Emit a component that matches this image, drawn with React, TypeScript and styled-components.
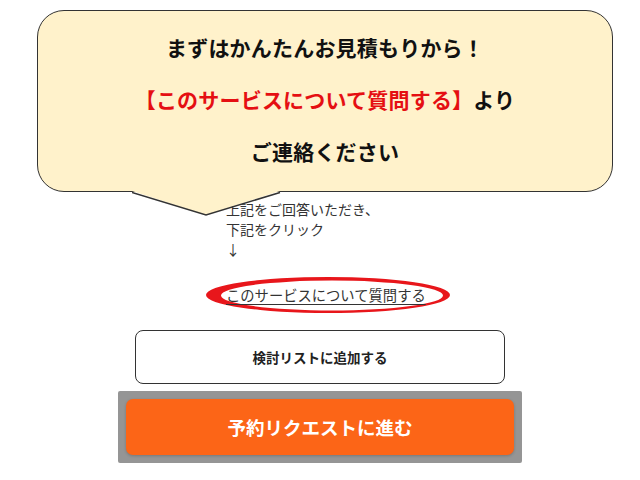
import styled, { createGlobalStyle } from 'styled-components'

const GlobalStyle = createGlobalStyle`
  html, body {
    margin: 0;
    padding: 0;
    background: #fff;
  }
  body {
    font-family: "Noto Sans CJK JP", "Noto Sans", sans-serif;
  }
`

const Page = styled.div`
  position: relative;
  width: 640px;
  height: 480px;
  overflow: hidden;
`

const Main = styled.div`
  width: 404px;
  margin: 0 auto;
  padding-top: 199px;
  display: flex;
  flex-direction: column;
`

const Guide = styled.div`
  padding-left: 108px;
  display: flex;
  flex-direction: column;
`

const GuideLine = styled.div`
  color: #333;
  font-size: 14px;
  line-height: 20px;
`

const LinkRow = styled.div`
  position: relative;
  margin-top: 23px;
  padding-left: 108px;
  height: 20px;
`

const QuestionLink = styled.a`
  position: relative;
  color: #333;
  font-size: 14.3px;
  line-height: 20px;
  text-decoration: underline;
  text-underline-offset: 3px;
  z-index: 1;
`

const Ellipse = styled.svg`
  position: absolute;
  left: 86px;
  top: -12px;
`

const ListButton = styled.button`
  margin: 28px 17px 0;
  height: 54px;
  border: 1px solid #333;
  border-radius: 8px;
  background: #fff;
  color: #222;
  font-family: inherit;
  font-size: 13.5px;
  font-weight: 700;
`

const RequestBand = styled.div`
  margin-top: 7px;
  padding: 8px;
  background: #959595;
  border-radius: 2px;
`

const RequestButton = styled.button`
  width: 100%;
  height: 56px;
  border: none;
  border-radius: 7px;
  background: #fc6517;
  color: #fff;
  font-family: inherit;
  font-size: 18.5px;
  font-weight: 700;
  box-shadow: 0 1px 3px rgba(0, 0, 0, 0.2);
`

const Bubble = styled.div`
  position: absolute;
  left: 37px;
  top: 10px;
  width: 576px;
  height: 182px;
  box-sizing: border-box;
  background: #fff2cb;
  border: 1.5px solid #333;
  border-radius: 27px;
  display: flex;
  flex-direction: column;
  align-items: center;
  padding-top: 10px;
  z-index: 2;
`

const Tail = styled.svg`
  position: absolute;
  left: 94px;
  top: 178px;
`

const BubbleLine = styled.div`
  color: #111;
  font-size: 21px;
  font-weight: 700;
  line-height: 52px;
  letter-spacing: 0.2px;
`

const Red = styled.span`
  color: #e50f12;
`

export default function App() {
  return (
    <>
      <GlobalStyle />
      <Page>
        <Main>
          <Guide>
            <GuideLine>上記をご回答いただき、</GuideLine>
            <GuideLine>下記をクリック</GuideLine>
            <GuideLine>↓</GuideLine>
          </Guide>
          <LinkRow>
            <Ellipse width="250" height="50" viewBox="0 0 250 50">
              <path
                fillRule="evenodd"
                fill="#e8161b"
                d="M2 25 A122 18 0 1 0 246 25 A122 18 0 1 0 2 25 Z M17 25.5 A111 15 0 1 0 239 25.5 A111 15 0 1 0 17 25.5 Z"
              />
            </Ellipse>
            <QuestionLink href="#">このサービスについて質問する</QuestionLink>
          </LinkRow>
          <ListButton>検討リストに追加する</ListButton>
          <RequestBand>
            <RequestButton>予約リクエストに進む</RequestButton>
          </RequestBand>
        </Main>
        <Bubble>
          <BubbleLine>まずはかんたんお見積もりから！</BubbleLine>
          <BubbleLine>
            <Red>【このサービスについて質問する】</Red>より
          </BubbleLine>
          <BubbleLine>ご連絡ください</BubbleLine>
          <Tail width="150" height="30" viewBox="0 0 150 30">
            <polygon points="0,2 74,26 148,2" fill="#fff2cb" />
            <polyline
              points="0,3.5 74,26 148,3.5"
              fill="none"
              stroke="#333"
              strokeWidth="1.5"
            />
          </Tail>
        </Bubble>
      </Page>
    </>
  )
}
